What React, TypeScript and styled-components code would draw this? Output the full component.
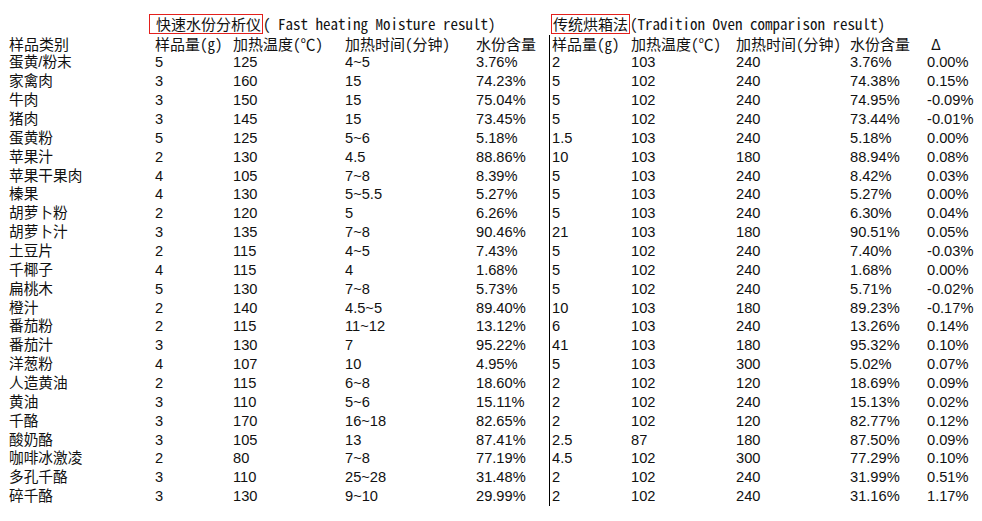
import React from "react";
import styled, { createGlobalStyle } from "styled-components";

const GlobalStyle = createGlobalStyle`
  html, body {
    margin: 0;
    padding: 0;
    background: #fff;
  }
  body {
    font-family: "Liberation Sans", "Noto Sans CJK SC", sans-serif;
    color: #111;
  }
`;

const COLUMNS = "146px 78px 112px 131px 73px 82px 105px 114px 77px 1fr";
const ROW_HEIGHT = 18.87;

const Sheet = styled.div`
  width: 982px;
  height: 521px;
  box-sizing: border-box;
  padding: 13.5px 0 0 9px;
  overflow: hidden;
`;

const TitleRow = styled.div`
  display: grid;
  grid-template-columns: ${COLUMNS};
  height: 21px;
  font-family: "Noto Sans Mono CJK SC", "Noto Sans CJK SC", monospace;
  font-size: 15px;
  white-space: nowrap;
`;

const TitleGroup = styled.div<{ $from: number; $to: number; $shift: number }>`
  grid-column: ${(p) => p.$from} / ${(p) => p.$to};
  margin-left: ${(p) => p.$shift}px;
  display: flex;
  align-items: flex-start;
`;

const RedBox = styled.span<{ $padLeft: number }>`
  display: inline-flex;
  align-items: center;
  height: 18px;
  border: 1px solid #e3201d;
  padding: 0 1px 0 ${(p) => p.$padLeft}px;
  line-height: 18px;
`;

const TitleNote = styled.span`
  line-height: 20px;
`;

const Row = styled.div<{ $head?: boolean }>`
  display: grid;
  grid-template-columns: ${COLUMNS};
  height: ${ROW_HEIGHT}px;
  line-height: ${ROW_HEIGHT}px;
  font-size: 14.67px;
  white-space: nowrap;
  ${(p) =>
    p.$head &&
    `font-family: "Noto Sans Mono CJK SC", "Noto Sans CJK SC", monospace;
     font-size: 15px;`}
`;

const Cell = styled.div<{ $split?: boolean; $indent?: number }>`
  ${(p) => (p.$split ? "border-left: 1px solid #000; padding-left: 2px;" : "")}
  ${(p) => (p.$indent ? `padding-left: ${p.$indent}px;` : "")}
`;

const headers = [
  "样品类别",
  "样品量(g)",
  "加热温度(℃)",
  "加热时间(分钟)",
  "水份含量",
  "样品量(g)",
  "加热温度(℃)",
  "加热时间(分钟)",
  "水份含量",
  "Δ",
];

const rows: string[][] = [
  ["蛋黄/粉末", "5", "125", "4~5", "3.76%", "2", "103", "240", "3.76%", "0.00%"],
  ["家禽肉", "3", "160", "15", "74.23%", "5", "102", "240", "74.38%", "0.15%"],
  ["牛肉", "3", "150", "15", "75.04%", "5", "102", "240", "74.95%", "-0.09%"],
  ["猪肉", "3", "145", "15", "73.45%", "5", "102", "240", "73.44%", "-0.01%"],
  ["蛋黄粉", "5", "125", "5~6", "5.18%", "1.5", "103", "240", "5.18%", "0.00%"],
  ["苹果汁", "2", "130", "4.5", "88.86%", "10", "103", "180", "88.94%", "0.08%"],
  ["苹果干果肉", "4", "105", "7~8", "8.39%", "5", "103", "240", "8.42%", "0.03%"],
  ["榛果", "4", "130", "5~5.5", "5.27%", "5", "103", "240", "5.27%", "0.00%"],
  ["胡萝卜粉", "2", "120", "5", "6.26%", "5", "103", "240", "6.30%", "0.04%"],
  ["胡萝卜汁", "3", "135", "7~8", "90.46%", "21", "103", "180", "90.51%", "0.05%"],
  ["土豆片", "2", "115", "4~5", "7.43%", "5", "102", "240", "7.40%", "-0.03%"],
  ["千椰子", "4", "115", "4", "1.68%", "5", "102", "240", "1.68%", "0.00%"],
  ["扁桃木", "5", "130", "7~8", "5.73%", "5", "102", "240", "5.71%", "-0.02%"],
  ["橙汁", "2", "140", "4.5~5", "89.40%", "10", "103", "180", "89.23%", "-0.17%"],
  ["番茄粉", "2", "115", "11~12", "13.12%", "6", "103", "240", "13.26%", "0.14%"],
  ["番茄汁", "3", "130", "7", "95.22%", "41", "103", "180", "95.32%", "0.10%"],
  ["洋葱粉", "4", "107", "10", "4.95%", "5", "103", "300", "5.02%", "0.07%"],
  ["人造黄油", "2", "115", "6~8", "18.60%", "2", "102", "120", "18.69%", "0.09%"],
  ["黄油", "3", "110", "5~6", "15.11%", "2", "102", "240", "15.13%", "0.02%"],
  ["千酪", "3", "170", "16~18", "82.65%", "2", "102", "120", "82.77%", "0.12%"],
  ["酸奶酪", "3", "105", "13", "87.41%", "2.5", "87", "180", "87.50%", "0.09%"],
  ["咖啡冰激凌", "2", "80", "7~8", "77.19%", "4.5", "102", "300", "77.29%", "0.10%"],
  ["多孔千酪", "3", "110", "25~28", "31.48%", "2", "102", "240", "31.99%", "0.51%"],
  ["碎千酪", "3", "130", "9~10", "29.99%", "2", "102", "240", "31.16%", "1.17%"],
];

export default function App() {
  return (
    <>
      <GlobalStyle />
      <Sheet>
        <TitleRow>
          <TitleGroup $from={2} $to={6} $shift={-6}>
            <RedBox $padLeft={6}>快速水份分析仪</RedBox>
            <TitleNote>( Fast heating Moisture result)</TitleNote>
          </TitleGroup>
          <TitleGroup $from={6} $to={11} $shift={2}>
            <RedBox $padLeft={1}>传统烘箱法</RedBox>
            <TitleNote>(Tradition Oven comparison result)</TitleNote>
          </TitleGroup>
        </TitleRow>
        <Row $head>
          {headers.map((h, i) => (
            <Cell key={i} $split={i === 5} $indent={i === 9 ? 4 : undefined}>
              {h}
            </Cell>
          ))}
        </Row>
        {rows.map((r, ri) => (
          <Row key={ri}>
            {r.map((v, ci) => (
              <Cell key={ci} $split={ci === 5}>
                {v}
              </Cell>
            ))}
          </Row>
        ))}
      </Sheet>
    </>
  );
}
